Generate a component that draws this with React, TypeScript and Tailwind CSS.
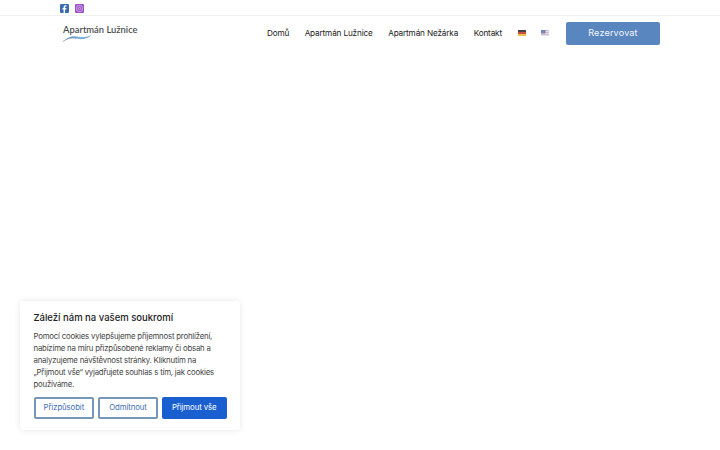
import React from "react";

function Fb() {
  return (
    <svg width="9" height="9" viewBox="0 0 9 9" className="block">
      <rect width="9" height="9" rx="1.2" fill="#3b6cb0" />
      <path d="M5 9V5.4h1.2l.2-1.4H5V3.2c0-.4.2-.7.7-.7h.8V1.3H5.400c-1.100 0-1.800.7-1.800 1.800V4H2.500v1.400h1.100V9z" fill="#fff" />
    </svg>
  );
}
function Ig() {
  return (
    <svg width="9" height="9" viewBox="0 0 9 9" className="block">
      <rect width="9" height="9" rx="1.2" fill="#9a50c8" />
      <rect x="1.700" y="1.700" width="5.600" height="5.600" rx="1.500" fill="none" stroke="#e3c9f2" strokeWidth=".7" />
      <circle cx="4.500" cy="4.500" r="1.200" fill="none" stroke="#e3c9f2" strokeWidth=".7" />
    </svg>
  );
}
function De() {
  return (
    <svg width="8" height="6" viewBox="0 0 8 6" className="block">
      <rect width="8" height="2" fill="#4a4040" />
      <rect y="2" width="8" height="2" fill="#c8503c" />
      <rect y="4" width="8" height="2" fill="#e8c050" />
    </svg>
  );
}
function Us() {
  return (
    <svg width="8" height="6" viewBox="0 0 8 6" className="block">
      <rect width="8" height="6" fill="#e0b4bc" />
      <rect y="1" width="8" height="1" fill="#e4e4ec" />
      <rect y="3" width="8" height="1" fill="#e4e4ec" />
      <rect y="5" width="8" height="1" fill="#e4e4ec" />
      <rect width="4.500" height="3.500" fill="#7686b8" />
    </svg>
  );
}
function Wave() {
  return (
    <svg width="29" height="8" viewBox="0 0 29 8" className="block">
      <path d="M0 7.500C5 3 9 1.500 14 2.500C19 3.500 24 3.500 29 0.500C25 5 19 6 14 4.800C9 3.600 5 4.500 0 7.500Z" fill="#7fb0d8" />
      <path d="M0 7.500C5 4 9 3 13 3.800" stroke="#5a6a78" strokeWidth=".5" fill="none" />
    </svg>
  );
}

export default function App() {
  const navLink = "text-[8.2px] leading-none tracking-[-0.15px] text-[#222] whitespace-nowrap";
  const outline = "h-[22px] rounded-[2px] border-2 border-[#7896b8] text-[#3f6fb5] text-[7.800px] tracking-[-0.1px] flex items-center justify-center";
  return (
    <div className="relative w-[720px] h-[450px] overflow-hidden bg-white font-['Inter',sans-serif]">
      <div className="h-[16px] border-b border-[#f0f0f0] flex items-center gap-[6px] pl-[60px] pt-[1px]">
        <Fb />
        <Ig />
      </div>
      <div className="flex items-center h-[34px] pl-[63px] pr-[60px]">
        <div className="flex flex-col w-[76px] -mt-[1px]">
          <span className="text-[9.400px] leading-[11px] font-semibold text-[#4a4d50] font-['Lato',sans-serif] whitespace-nowrap">Apartmán Lužnice</span>
          <div className="-mt-[1px]"><Wave /></div>
        </div>
        <nav className="ml-auto mr-[17px] flex items-center gap-[15.500px]">
          <span className={navLink}>Domů</span>
          <span className={navLink}>Apartmán Lužnice</span>
          <span className={navLink}>Apartmán Nežárka</span>
          <span className={navLink}>Kontakt</span>
          <De />
          <Us />
        </nav>
        <button className="w-[94px] h-[23px] rounded-[2px] bg-[#5a86c0] text-[#f2f6fb] text-[9px] tracking-[0.2px] flex items-center justify-center">Rezervovat</button>
      </div>

      <div className="absolute left-[20px] top-[301px] w-[220px] h-[129px] bg-white rounded-[3px] shadow-[0_0_6px_rgba(0,0,0,0.1)] px-[13.500px] pt-[10px]">
        <div className="text-[9.500px] leading-[13px] font-medium text-[#222] whitespace-nowrap">Záleží nám na vašem soukromí</div>
        <div className="mt-[6px] text-[7.800px] tracking-[-0.2px] leading-[12px] text-[#444]">
          <div className="whitespace-nowrap">Pomocí cookies vylepšujeme příjemnost prohlížení,</div>
          <div className="whitespace-nowrap">nabízíme na míru přizpůsobené reklamy či obsah a</div>
          <div className="whitespace-nowrap">analyzujeme návštěvnost stránky. Kliknutím na</div>
          <div className="whitespace-nowrap">„Přijmout vše“ vyjadřujete souhlas s tím, jak cookies</div>
          <div className="whitespace-nowrap">používáme.</div>
        </div>
        <div className="mt-[7px] flex gap-[4px]">
          <button className={outline + " w-[61px]"}>Přizpůsobit</button>
          <button className={outline + " w-[60px]"}>Odmítnout</button>
          <button className="w-[65px] h-[22px] rounded-[2px] bg-[#1a5fd0] text-white text-[7.800px] tracking-[-0.1px] flex items-center justify-center">Přijmout vše</button>
        </div>
      </div>
    </div>
  );
}
